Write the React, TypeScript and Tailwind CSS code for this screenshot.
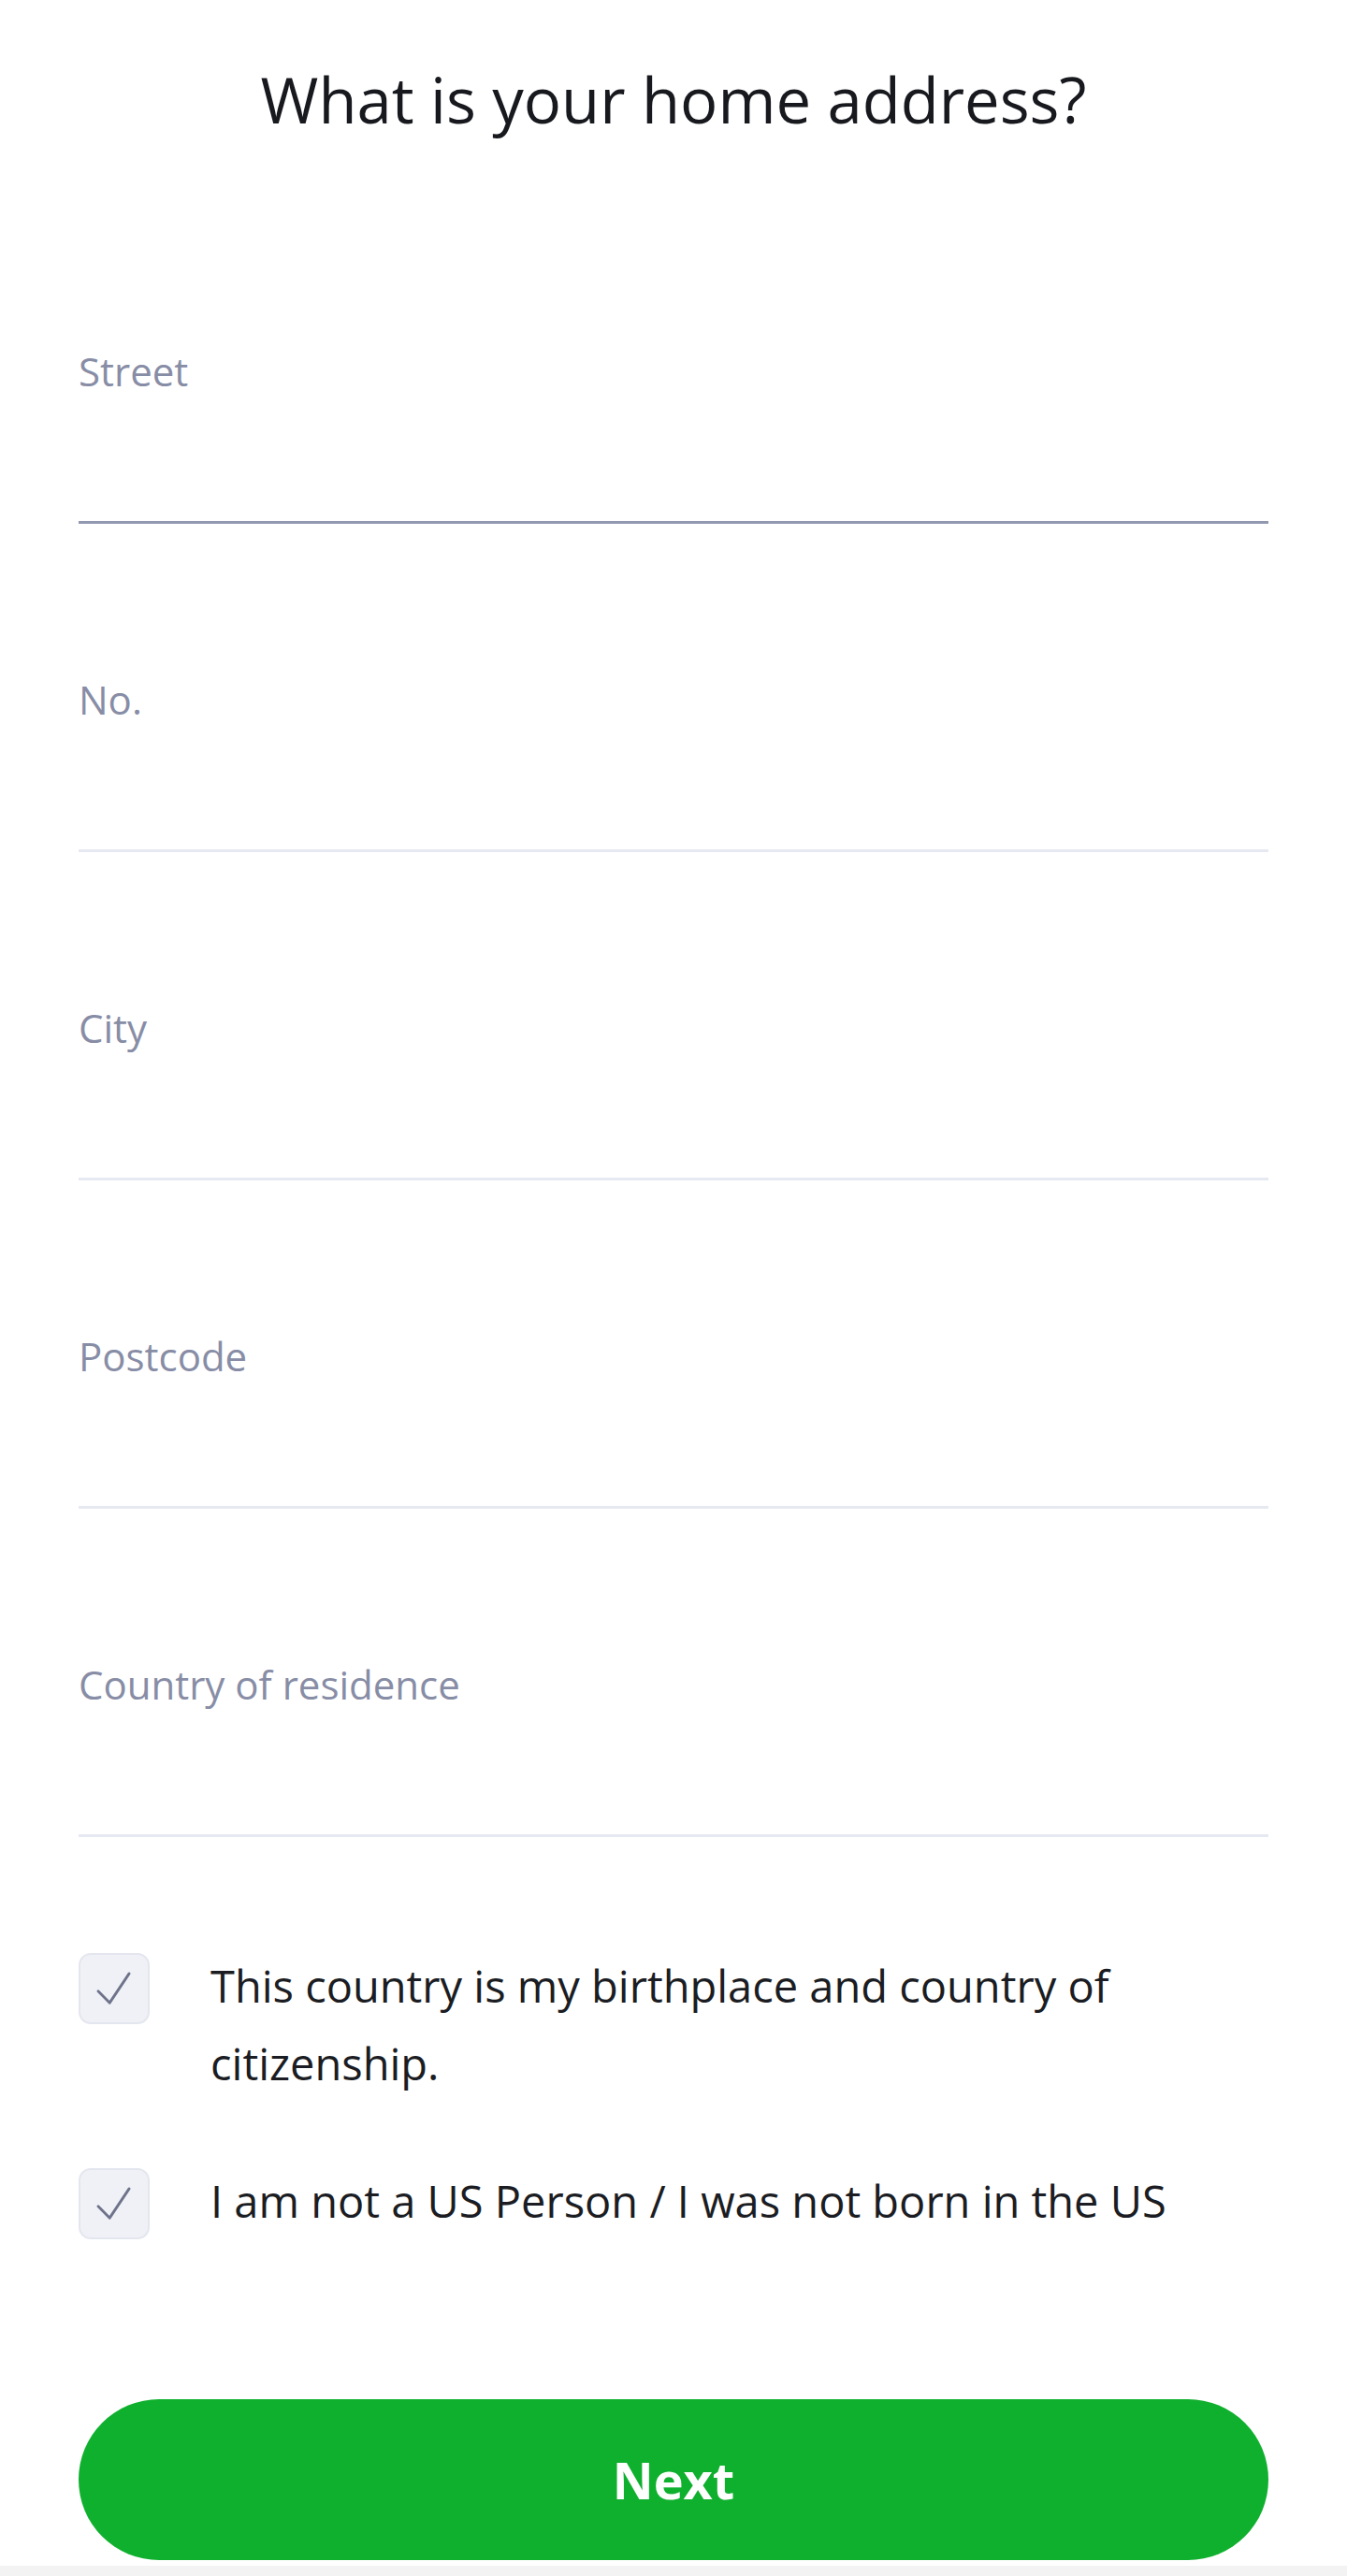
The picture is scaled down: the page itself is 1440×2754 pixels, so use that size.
import React from 'react';

const fields = ['Street', 'No.', 'City', 'Postcode', 'Country of residence'];

const Check: React.FC = () => (
  <div className="mt-[6px] flex h-[76px] w-[76px] shrink-0 items-center justify-center rounded-[13px] border-2 border-[#e4e6ef] bg-[#f0f1f6]">
    <svg width="76" height="76" viewBox="0 0 76 76" fill="none">
      <path d="M20 41 L33 54 L55 21" stroke="#6e738b" strokeWidth="3" strokeLinecap="round" strokeLinejoin="round" />
    </svg>
  </div>
);

const App: React.FC = () => {
  return (
    <div className="flex min-h-[2754px] w-full flex-col bg-white font-['Open_Sans',sans-serif]">
      <h1 className="pt-[61px] text-center text-[67px] font-normal leading-[91px] text-[#17191e]">
        What is your home address?
      </h1>

      <div className="mt-[216px] flex flex-col gap-[159px] px-[84px]">
        {fields.map((label, i) => (
          <div key={label} className="flex flex-col">
            <span className="text-[42px] leading-[57px] text-[#888da6]">{label}</span>
            <div
              className={
                i === 0
                  ? 'h-[135px] border-b-[3px] border-[#9298b0]'
                  : 'h-[135px] border-b-[3px] border-[#e6e9f1]'
              }
            />
          </div>
        ))}
      </div>

      <div className="mt-[118px] flex flex-col gap-[64px] px-[84px]">
        <label className="flex items-start gap-[65px]">
          <Check />
          <span className="text-[47px] leading-[83px] text-[#1b1d23]">
            This country is my birthplace and country of citizenship.
          </span>
        </label>
        <label className="flex items-start gap-[65px]">
          <Check />
          <span className="text-[47px] leading-[83px] text-[#1b1d23]">
            I am not a US Person / I was not born in the US
          </span>
        </label>
      </div>

      <div className="mt-[170px] px-[84px]">
        <button className="flex h-[172px] w-full items-center justify-center rounded-full bg-[#10b02f] text-[54px] font-bold text-white">
          Next
        </button>
      </div>

      <div className="mt-[6px] h-[11px] bg-[#f3f3f3]" />
    </div>
  );
};

export default App;
